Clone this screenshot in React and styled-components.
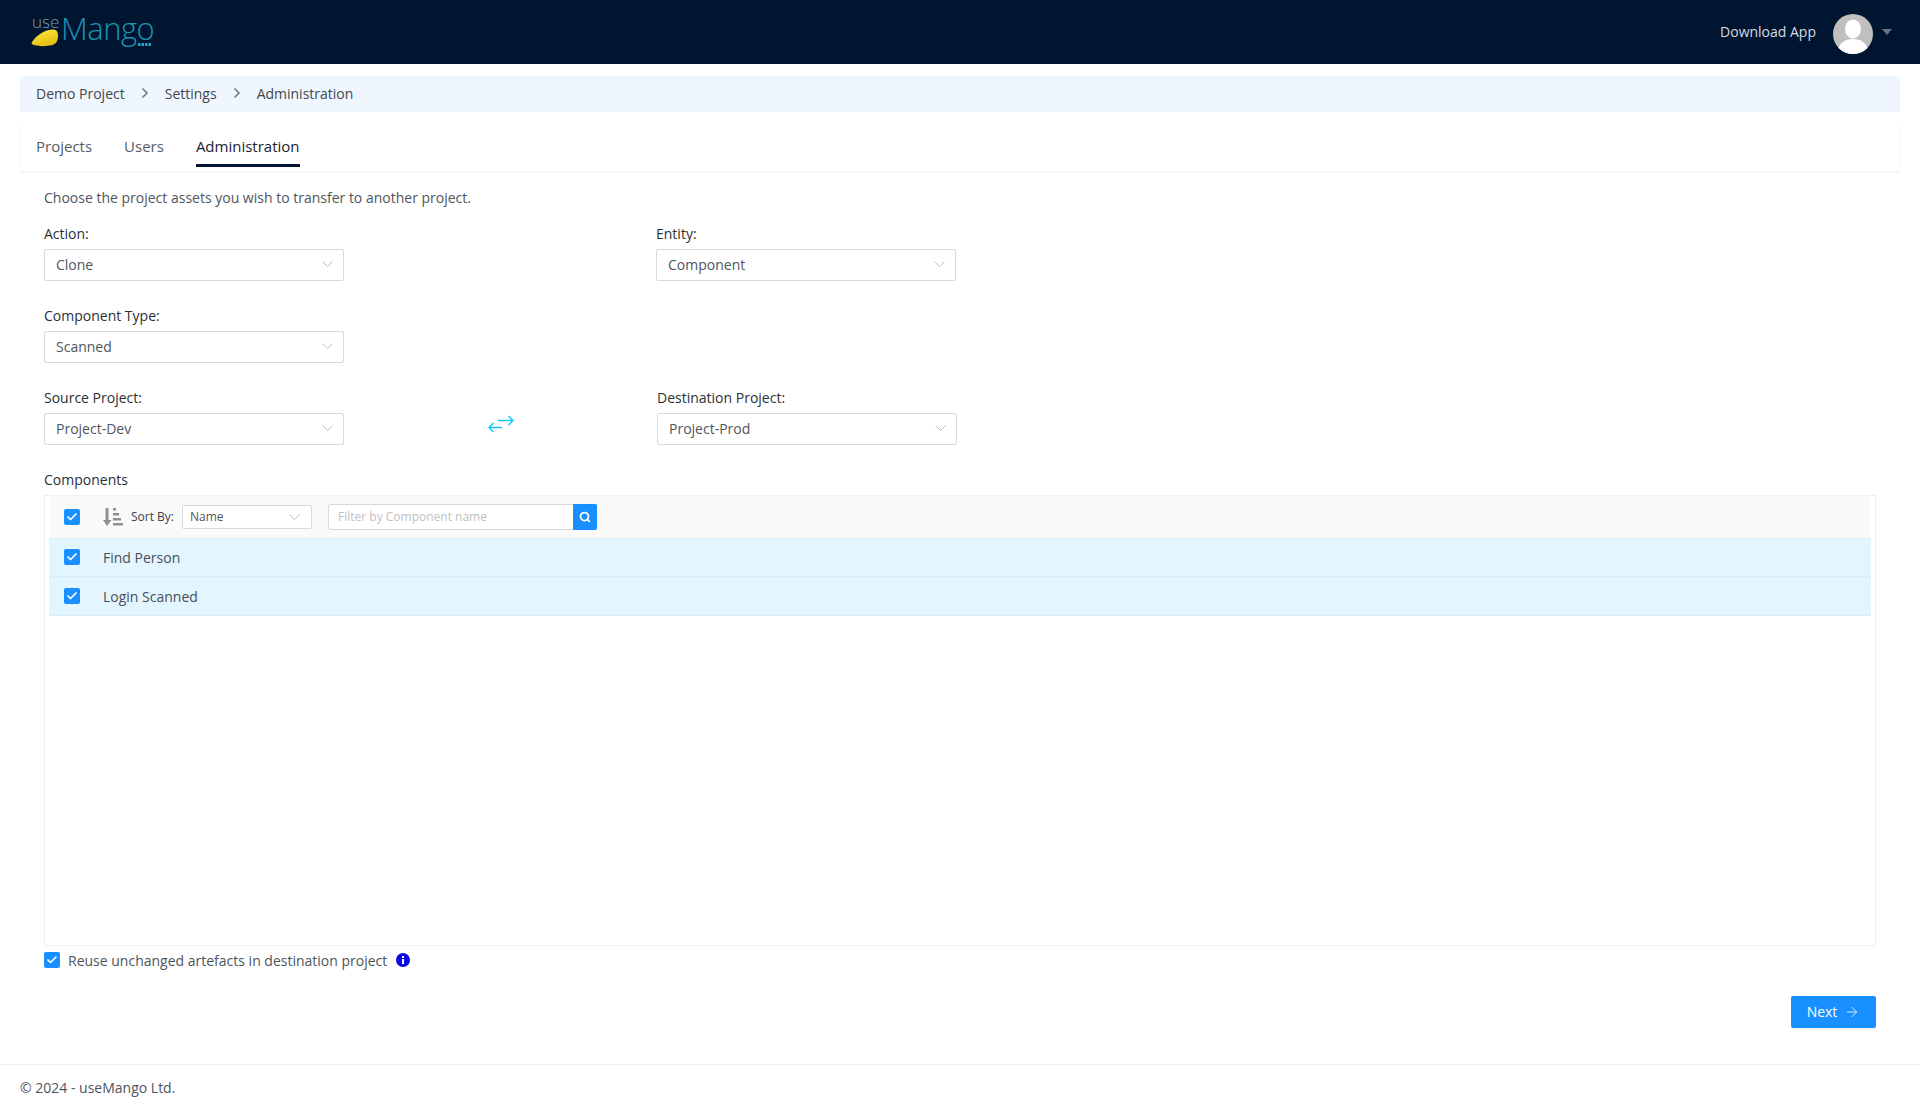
import React from 'react';
import styled, { createGlobalStyle } from 'styled-components';
import { ArrowRight, Check, ChevronRight, Search } from 'lucide-react';

const GlobalStyle = createGlobalStyle`
  html, body {
    margin: 0;
    padding: 0;
    background: #fff;
  }
  body {
    font-family: 'Open Sans', 'Liberation Sans', sans-serif;
    font-size: 14px;
    color: #3a3f47;
  }
  * {
    box-sizing: border-box;
  }
`;

const Page = styled.div`
  display: flex;
  flex-direction: column;
  height: 100vh;
  overflow: hidden;
`;

const Header = styled.header`
  flex: 0 0 64px;
  background: #00152f;
  display: flex;
  align-items: center;
  justify-content: space-between;
  padding: 0 28px 0 30px;
`;

const Logo = styled.div`
  position: relative;
  width: 125px;
  height: 48px;
  color: #1b93b5;
`;

const LogoUse = styled.span`
  position: absolute;
  left: 2px;
  top: 4px;
  font-size: 17px;
  line-height: 20px;
  font-weight: 300;
  color: #7d9aa8;
`;

const LogoMango = styled.span`
  position: absolute;
  left: 31px;
  top: 0;
  font-size: 31px;
  line-height: 40px;
  font-weight: 300;
  letter-spacing: -0.5px;
`;

const HeaderRight = styled.div`
  display: flex;
  align-items: center;
`;

const DownloadLink = styled.span`
  color: #d5dbe3;
  margin: 0 17px 2px 0;
`;

const Avatar = styled.svg`
  margin-top: 4px;
`;

const Caret = styled.span`
  width: 0;
  height: 0;
  margin-left: 9px;
  border-left: 5.5px solid transparent;
  border-right: 5.5px solid transparent;
  border-top: 6px solid #6d7480;
`;

const Crumbs = styled.nav`
  margin: 12px 20px 0;
  height: 36px;
  background: #f0f6fd;
  display: flex;
  align-items: center;
  padding: 0 0 2px 16px;
  color: #42474f;
`;

const CrumbSep = styled(ChevronRight)`
  margin: 0 12px;
  color: #73777f;
`;

const TabBar = styled.div`
  margin: 12px 20px 0;
  height: 47px;
  display: flex;
  gap: 32px;
  padding-left: 16px;
  box-shadow: 0 1px 2px rgba(0, 0, 0, 0.08);
  border-radius: 2px;
`;

const Tab = styled.div`
  height: 43px;
  padding-top: 12px;
  font-size: 15px;
  line-height: 21px;
  color: ${(p) => (p.$active ? '#1b2230' : '#555b64')};
  font-weight: ${(p) => (p.$active ? 500 : 400)};
  border-bottom: ${(p) => (p.$active ? '3px solid #00152f' : 'none')};
`;

const Main = styled.main`
  flex: 1;
  display: flex;
  flex-direction: column;
  padding: 16px 44px 0;
`;

const Intro = styled.p`
  margin: 0;
  line-height: 21px;
  color: #50555d;
`;

const Row = styled.div`
  display: flex;
  align-items: flex-start;
  margin-top: ${(p) => p.$top || 0}px;
`;

const Field = styled.div`
  width: 300px;
  margin-left: ${(p) => p.$left || 0}px;
`;

const Label = styled.label`
  display: block;
  line-height: 20px;
  margin-bottom: 5px;
  font-weight: 500;
  color: #2b2f36;
`;

const SelectBox = styled.div`
  height: ${(p) => (p.$small ? '24px' : '32px')};
  width: ${(p) => (p.$small ? '130px' : '100%')};
  flex: none;
  border: 1px solid #d9d9d9;
  border-radius: 2px;
  background: #fff;
  display: flex;
  align-items: center;
  justify-content: space-between;
  padding: ${(p) => (p.$small ? '0 11px 0 7px' : '0 10px 2px 11px')};
  font-size: ${(p) => (p.$small ? '12px' : '14px')};
  color: #50555d;
`;

const SwapSlot = styled.div`
  width: 313px;
  padding-top: 27px;
  display: flex;
  justify-content: center;
`;

const SectionTitle = styled.div`
  margin-top: 25px;
  line-height: 20px;
  font-weight: 500;
  color: #2b2f36;
`;

const ListBox = styled.div`
  margin-top: 5px;
  height: 451px;
  border: 1px solid #f0f0f0;
  padding: 0 4px;
`;

const Toolbar = styled.div`
  height: 42px;
  background: #fafafa;
  border-bottom: 1px solid #f0f0f0;
  display: flex;
  align-items: center;
  padding-left: 15px;
`;

const Tick = styled.span`
  width: 16px;
  height: 16px;
  flex: none;
  border-radius: 2px;
  background: #1890ff;
  color: #fff;
  display: flex;
  align-items: center;
  justify-content: center;
`;

const SortIcon = styled.svg`
  margin: 0 8px 0 23px;
  color: #8f8f8f;
`;

const SortLabel = styled.span`
  font-size: 12px;
  margin-right: 8px;
  color: #3d4249;
`;

const FilterGroup = styled.div`
  margin-left: 16px;
  width: 269px;
  height: 26px;
  display: flex;
  border: 1px solid #d9d9d9;
  border-radius: 2px;
  background: #fff;
`;

const FilterInput = styled.div`
  flex: 1;
  padding-left: 9px;
  font-size: 12px;
  line-height: 24px;
  color: #bfbfbf;
`;

const FilterButton = styled.span`
  width: 24px;
  margin: -1px -1px -1px 0;
  background: #1890ff;
  border-radius: 0 2px 2px 0;
  color: #fff;
  display: flex;
  align-items: center;
  justify-content: center;
`;

const ItemRow = styled.div`
  height: 39px;
  background: #e3f5fe;
  border-bottom: 1px solid #d8eef9;
  display: flex;
  align-items: center;
  padding-left: 15px;
  color: #4a4f57;
`;

const ItemName = styled.span`
  margin-left: 23px;
`;

const ReuseRow = styled.div`
  margin-top: 4px;
  height: 20px;
  display: flex;
  align-items: center;
  color: #50555d;
`;

const ReuseLabel = styled.span`
  margin: 0 9px 0 8px;
`;

const ActionRow = styled.div`
  margin-top: 26px;
  display: flex;
  justify-content: flex-end;
`;

const NextButton = styled.button`
  width: 85px;
  height: 32px;
  border: none;
  border-radius: 2px;
  background: #1890ff;
  color: #fff;
  font: inherit;
  padding: 0 0 1px;
  display: flex;
  align-items: center;
  justify-content: center;
  gap: 7px;
  box-shadow: 0 2px 0 rgba(0, 0, 0, 0.045);
  svg {
    color: #d3e9ff;
  }
`;

const Footer = styled.footer`
  flex: 0 0 40px;
  border-top: 1px solid #eeeeee;
  padding: 13px 20px 0;
  line-height: 20px;
  color: #50555d;
`;

const Select = ({ value, small }) => (
  <SelectBox $small={small}>
    {value}
    <svg width="11" height="6" viewBox="0 0 11 6" fill="none" stroke="#bdbdbd">
      <path d="M0.500 0.500L5.500 5.500L10.500 0.500" />
    </svg>
  </SelectBox>
);

const CheckMark = () => (
  <Tick>
    <Check size={12} strokeWidth={3.5} />
  </Tick>
);

const App = () => (
  <Page>
    <GlobalStyle />
    <Header>
      <Logo>
        <LogoUse>use</LogoUse>
        <LogoMango>Mango</LogoMango>
        <svg width="125" height="48" viewBox="0 0 125 48">
          <defs>
            <linearGradient id="mangoFill" x1="0.300" y1="0" x2="0.700" y2="1">
              <stop offset="0" stopColor="#fbe83a" />
              <stop offset="1" stopColor="#e6b70f" />
            </linearGradient>
          </defs>
          <path
            d="M2 34C6 28 14 22 22 21.500C27 21 28 24 28 28C28 33 26 37 20 37.500C14 38.500 8 38.500 4 37C2 36.500 1 35.500 2 34Z"
            fill="url(#mangoFill)"
          />
          <g fill="#2a9fc0">
            <rect x="108" y="35" width="2.500" height="3" />
            <rect x="111.500" y="35" width="2.500" height="3" />
            <rect x="115" y="35" width="2.500" height="3" />
            <rect x="118.500" y="35" width="2.500" height="3" />
          </g>
        </svg>
      </Logo>
      <HeaderRight>
        <DownloadLink>Download App</DownloadLink>
        <Avatar width="40" height="40" viewBox="0 0 40 40">
          <defs>
            <clipPath id="avatarClip">
              <circle cx="20" cy="20" r="20" />
            </clipPath>
          </defs>
          <circle cx="20" cy="20" r="20" fill="#bfbfbf" />
          <g clipPath="url(#avatarClip)" fill="#fff">
            <ellipse cx="20" cy="15" rx="8" ry="9.500" />
            <path d="M4 40C5 29 12 25 20 25C28 25 35 29 36 40Z" />
          </g>
        </Avatar>
        <Caret />
      </HeaderRight>
    </Header>

    <Crumbs>
      Demo Project
      <CrumbSep size={16} strokeWidth={2.5} />
      Settings
      <CrumbSep size={16} strokeWidth={2.5} />
      Administration
    </Crumbs>

    <TabBar>
      <Tab>Projects</Tab>
      <Tab>Users</Tab>
      <Tab $active>Administration</Tab>
    </TabBar>

    <Main>
      <Intro>Choose the project assets you wish to transfer to another project.</Intro>

      <Row $top={16}>
        <Field>
          <Label>Action:</Label>
          <Select value="Clone" />
        </Field>
        <Field $left={312}>
          <Label>Entity:</Label>
          <Select value="Component" />
        </Field>
      </Row>

      <Row $top={25}>
        <Field>
          <Label>Component Type:</Label>
          <Select value="Scanned" />
        </Field>
      </Row>

      <Row $top={25}>
        <Field>
          <Label>Source Project:</Label>
          <Select value="Project-Dev" />
        </Field>
        <SwapSlot>
          <svg width="26" height="18" viewBox="0 0 26 18" fill="none" stroke="#14c8f4" strokeWidth="1.500">
            <path d="M1 12.500H14M5.500 8L1 12.500L5.500 17" />
            <path d="M25 5.500H10M20.500 1L25 5.500L20.500 10" />
          </svg>
        </SwapSlot>
        <Field>
          <Label>Destination Project:</Label>
          <Select value="Project-Prod" />
        </Field>
      </Row>

      <SectionTitle>Components</SectionTitle>
      <ListBox>
        <Toolbar>
          <CheckMark />
          <SortIcon width="20" height="20" viewBox="0 0 20 20" fill="currentColor">
            <path d="M2.500 1H5.500V13H8.500L4 19L0 13H2.500Z" />
            <rect x="10" y="1" width="3" height="2.500" />
            <rect x="10" y="6" width="6" height="2.500" />
            <rect x="10" y="11" width="8" height="2.500" />
            <rect x="10" y="16" width="10" height="2.500" />
          </SortIcon>
          <SortLabel>Sort By:</SortLabel>
          <Select value="Name" small />
          <FilterGroup>
            <FilterInput>Filter by Component name</FilterInput>
            <FilterButton>
              <Search size={12} strokeWidth={3.500} />
            </FilterButton>
          </FilterGroup>
        </Toolbar>
        <ItemRow>
          <CheckMark />
          <ItemName>Find Person</ItemName>
        </ItemRow>
        <ItemRow>
          <CheckMark />
          <ItemName>Login Scanned</ItemName>
        </ItemRow>
      </ListBox>

      <ReuseRow>
        <CheckMark />
        <ReuseLabel>Reuse unchanged artefacts in destination project</ReuseLabel>
        <svg width="14" height="14" viewBox="0 0 14 14">
          <circle cx="7" cy="7" r="7" fill="#0a0ae6" />
          <rect x="6" y="3" width="2" height="2" fill="#fff" />
          <rect x="6" y="6" width="2" height="5" fill="#fff" />
        </svg>
      </ReuseRow>

      <ActionRow>
        <NextButton>
          Next
          <ArrowRight size={16} strokeWidth={1.500} />
        </NextButton>
      </ActionRow>
    </Main>

    <Footer>© 2024 - useMango Ltd.</Footer>
  </Page>
);

export default App;
